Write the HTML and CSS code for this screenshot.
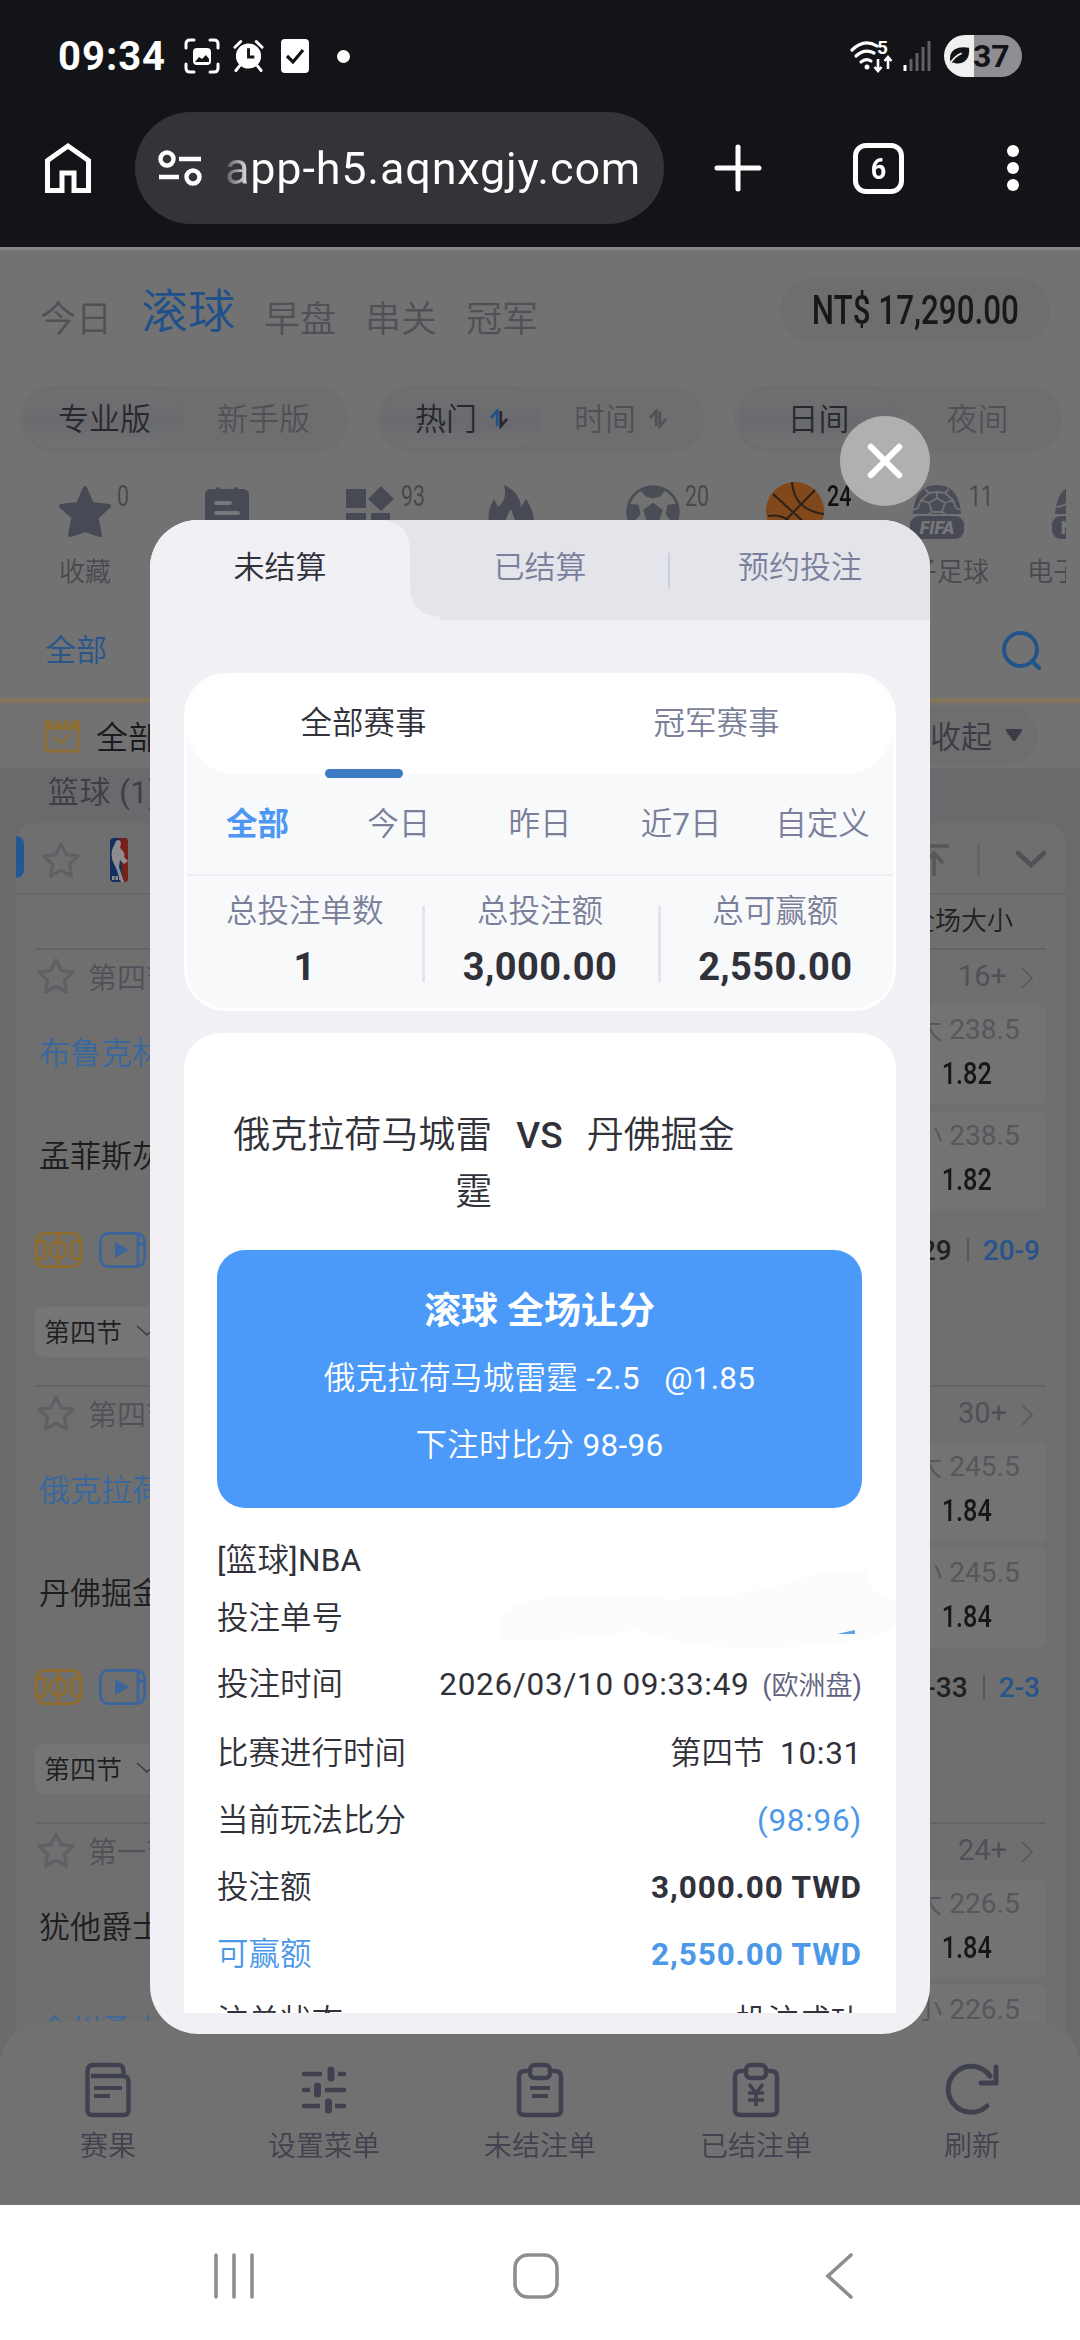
FILE: index.html
```html
<!DOCTYPE html>
<html lang="zh-CN">
<head>
<meta charset="utf-8">
<title>未结算注单</title>
<link rel="stylesheet" href="styles.css">
</head>
<body>
<svg class="defs" width="0" height="0">
  <symbol id="star-o" viewBox="0 0 42 40"><path d="M21 4l5.2 10.6 11.8 1.6-8.600 8.200 2.100 11.600L21 30.500 10.500 36l2.100-11.600L4 16.200l11.800-1.600z" fill="none" stroke="#5f5f65" stroke-width="3.200" stroke-linejoin="round"/></symbol>
  <symbol id="court" viewBox="0 0 47 36"><g fill="none" stroke="#916e2e" stroke-width="2.800"><rect x="1.400" y="1.400" width="44.200" height="33.200" rx="8"/><path d="M23.500 1v34M1 9h6q3 0 3 3v12q0 3-3 3H1M46 9h-6q-3 0-3 3v12q0 3 3 3h6"/><circle cx="23.500" cy="18" r="8.500"/></g></symbol>
  <symbol id="video" viewBox="0 0 47 36"><g fill="none" stroke="#3a659d" stroke-width="2.800"><rect x="1.400" y="1.400" width="44.200" height="33.200" rx="8"/><path d="M39 1v34"/><path d="M39 12h7M39 3h4"/></g><path d="M16 10v16l14-8z" fill="#3a659d"/></symbol>
  <symbol id="sort" viewBox="0 0 20 22"><path d="M1 10l7-8v17" fill="none" stroke="var(--a)" stroke-width="3"/><path d="M12 2v17l7-8" fill="none" stroke="var(--b)" stroke-width="3"/></symbol>
  <symbol id="chev" viewBox="0 0 12 22"><path d="M1 1l10 10L1 21" fill="none" stroke="#59595c" stroke-width="1.600"/></symbol>
  <symbol id="down" viewBox="0 0 22 12"><path d="M1 1l10 9L21 1" fill="none" stroke="#3c3c3e" stroke-width="1.600"/></symbol>
  <symbol id="ball" viewBox="0 0 52 52"><circle cx="26" cy="26" r="24.500" fill="none" stroke="#4a4c56" stroke-width="2.500"/><path d="M26 17l9.500 7-3.600 11H20l-3.500-11zM14 5q12-6 24 0l-5 6-7 2-7-2zM3 18l9 1 2 9-7 9-5-6q-2-7 1-13zM49 18l-9 1-2 9 7 9 5-6q2-7-1-13z" fill="#4a4c56"/></symbol>
</svg>

<header class="chrome">
  <div class="status">
    <span class="clock">09:34</span>
    <svg class="s-shot" viewBox="0 0 36 36"><g fill="none" stroke="#fff" stroke-width="3" stroke-linecap="round"><path d="M2 10V6q0-4 4-4h4M26 2h4q4 0 4 4v4M34 26v4q0 4-4 4h-4M10 34H6q-4 0-4-4v-4"/></g><rect x="9" y="10" width="18" height="17" rx="4" fill="#fff"/><path d="M11 24l4-5 3 2 4-4 3 4v3z" fill="#131418"/></svg>
    <svg class="s-alarm" viewBox="0 0 32 34"><circle cx="16" cy="17" r="13" fill="#fff"/><path d="M7 27l-4 5M25 27l4 5M2 8l6-6M30 8l-6-6" stroke="#fff" stroke-width="3" stroke-linecap="round"/><path d="M16 9v9h6" fill="none" stroke="#131418" stroke-width="3"/></svg>
    <svg class="s-check" viewBox="0 0 28 34"><rect width="28" height="34" rx="4" fill="#fff"/><path d="M6 17l6 6 10-12" fill="none" stroke="#131418" stroke-width="3.200"/></svg>
    <span class="s-dot"></span>
    <span class="grow"></span>
    <svg class="s-wifi" viewBox="0 0 44 34"><g fill="none" stroke="#fff" stroke-width="3.200" stroke-linecap="round"><path d="M2 11Q14-1 27 7M6 17q9-8 18-3M11 23q5-4 10-1"/></g><circle cx="17" cy="28" r="2.500" fill="#fff"/><path d="M28 20v12M24.500 28l3.500 4 3.500-4M38 30V18M34.500 22l3.500-4 3.500 4" fill="none" stroke="#fff" stroke-width="2.600"/><text x="27" y="15" font-size="19" font-weight="700" fill="#fff">5</text></svg>
    <svg class="s-sig" viewBox="0 0 28 30"><path d="M2 24v6" stroke="#fff" stroke-width="3"/><path d="M8 18v12M14 12v18M20 6v24M26 0v30" stroke="#606165" stroke-width="3"/></svg>
    <span class="battery"><svg viewBox="0 0 24 24"><path d="M3 20Q0 10 7 5q6-4 16-2 1 11-5 15-6 4-12 1z" fill="#131418"/><path d="M1 22Q7 12 15 9" stroke="#f0f0f0" stroke-width="2" fill="none"/></svg>37</span>
  </div>
  <div class="toolbar">
    <svg class="home" viewBox="0 0 48 52"><path d="M3.500 18.500L24 4l20.500 14.500v30H30V31H18v17.500H3.500z" fill="none" stroke="#fff" stroke-width="5"/></svg>
    <div class="url">
      <svg viewBox="0 0 44 36"><g fill="none" stroke="#fff" stroke-width="4.400"><circle cx="9" cy="9" r="6.500"/><path d="M21 9h22M1 27h20"/><circle cx="35" cy="27" r="6.500"/></g></svg>
      <span>app-h5.aqnxgjy.com</span>
    </div>
    <svg class="plus" viewBox="0 0 46 46"><path d="M23 2v42M2 23h42" stroke="#fff" stroke-width="5" stroke-linecap="round"/></svg>
    <span class="tabs-n"><span>6</span></span>
    <span class="dots"><i></i><i></i><i></i></span>
  </div>
</header>

<main class="page">
  <div class="top">
    <nav class="cats"><span>今日</span><span class="on">滚球</span><span>早盘</span><span>串关</span><span>冠军</span></nav>
    <div class="wallet"><span class="din">NT$ 17,290.00</span></div>
  </div>
  <div class="modes">
    <div class="seg"><span class="on">专业版</span><span>新手版</span></div>
    <div class="seg"><span class="on">热门 <svg class="s1"><use href="#sort"/></svg></span><span>时间 <svg class="s2"><use href="#sort"/></svg></span></div>
    <div class="seg"><span class="on">日间</span><span>夜间</span></div>
  </div>
  <div class="sports">
    <div class="sport"><svg viewBox="0 0 54 54"><path d="M27 3l7 16 17 2-12.500 11.500L42 50l-15-5-15 5 3.500-17.500L3 21l17-2z" fill="#474954" stroke="#474954" stroke-width="4" stroke-linejoin="round"/></svg><b>0</b><span>收藏</span></div>
    <div class="sport"><svg viewBox="0 0 54 54"><path d="M11 4h5q1-4 5 0h12q4-4 5 0h5q6 0 6 6v38q0 4-6 4H11q-6 0-6-4V10q0-6 6-6z" fill="#474954"/><path d="M16 18h14M16 28h22" stroke="#77777b" stroke-width="4" stroke-linecap="round"/></svg></div>
    <div class="sport"><svg viewBox="0 0 54 54"><path d="M4 4h20v19H4zM4 28h20v20H4zM29 28h19v20H29zM39 1l13 13-13 12-13-12z" fill="#474954"/></svg><b>93</b></div>
    <div class="sport"><svg viewBox="0 0 54 54"><path d="M8 50Q0 30 10 14l4 8Q24 14 20 0q16 7 17 22l5-8q13 20 5 34l-8-12-4 10-8-22q-6 8-8 24z" fill="#474954"/></svg></div>
    <div class="sport"><svg><use href="#ball"/></svg><b>20</b></div>
    <div class="sport cur"><svg viewBox="0 0 58 58"><circle cx="29" cy="29" r="29" fill="#80481b"/><g fill="none" stroke="#2d2119" stroke-width="2"><path d="M7 12l44 40M49 8L8 50M26 0q2 28 32 32M2 34q24-4 32 24"/></g></svg><b>24</b></div>
    <div class="sport"><svg viewBox="0 0 54 54"><path d="M3 29Q5 0 27 0t24 29z" fill="#4a4c56"/><path d="M27 13l8 5-3 9H22l-3-9zM27 13V7M19 18l-8-3M35 18l8-3M22 27l-5 3M32 27l5 3M15 4l4 4 8-1 8 1 4-4M11 15l-3 8-5 2M43 15l3 8 5 2M11 15l8-7M43 15l-8-7" fill="none" stroke="#717174" stroke-width="1.800"/><rect y="31" width="54" height="23" rx="9" fill="#474954"/><text x="27" y="49" text-anchor="middle" font-size="18" font-weight="900" font-style="italic" fill="#77777a">FIFA</text></svg><b>11</b><span>电子足球</span></div>
    <div class="sport"><svg viewBox="0 0 54 54"><path d="M3 29Q5 0 27 0t24 29z" fill="#4a4c56"/><path d="M4 22Q14 22 22 12" stroke="#717174" stroke-width="2" fill="none"/><rect y="31" width="54" height="23" rx="9" fill="#474954"/><text x="27" y="49" text-anchor="middle" font-size="18" font-weight="900" fill="#77777a">NBA</text></svg><span>电子篮球</span></div>
  </div>
  <div class="leagues"><span>全部</span><svg viewBox="0 0 40 40"><circle cx="18.500" cy="18.500" r="16.500" fill="none" stroke="#21548a" stroke-width="3.800"/><path d="M30 30l7 7" stroke="#21548a" stroke-width="4.200" stroke-linecap="round"/></svg></div>
  <div class="allbar">
    <svg class="cal" viewBox="0 0 36 36"><path d="M1.500 5h33v29h-33z" fill="none" stroke="#8b6f38" stroke-width="3"/><path d="M0 4h36v9H0z" fill="#8b6f38"/><path d="M10 0v8M18 0v8M26 0v8" stroke="#75736b" stroke-width="4"/><path d="M10 20l7 6 9-9" fill="none" stroke="#8b6f38" stroke-width="2.500"/></svg>
    <span class="t">全部</span>
    <span class="fold">收起 <svg viewBox="0 0 18 14"><path d="M1 1h16v2l-7 10H8L1 3z" fill="#3c3c46"/></svg></span>
  </div>
  <div class="group">篮球 (1)</div>
  <section class="board">
    <div class="bhead">
      <i class="chip"></i>
      <svg class="st"><use href="#star-o"/></svg>
      <svg class="nba" viewBox="0 0 18 44"><rect width="18" height="44" rx="4" fill="#12305f"/><path d="M9 0h5q4 0 4 4v36q0 4-4 4h-1z" fill="#752018"/><path d="M6 3q4-3 5 2l-1 5q6 5 4 9l4 4-4 3-4-4-1 7 5 15H11L6 30Q0 20 2 12z" fill="#8d8d90"/><path d="M2 40h9" stroke="#8d8d90" stroke-width="4" stroke-dasharray="2.500 1"/></svg>
      <span class="grow"></span>
      <svg class="totop" viewBox="0 0 30 32"><path d="M0 2h30M15 32V9M6 19l9-10 9 10" fill="none" stroke="#57575a" stroke-width="3.500"/></svg>
      <i class="bar"></i>
      <svg class="bchev" viewBox="0 0 30 18"><path d="M2 2l13 12L28 2" fill="none" stroke="#505055" stroke-width="4.500" stroke-linecap="round"/></svg>
    </div>
    <div class="bcols"><span>全场大小</span></div>

    <article class="match">
      <div class="mhead"><svg class="st"><use href="#star-o"/></svg><span>第四节</span><span class="grow"></span><span class="more">16+</span><svg class="cv"><use href="#chev"/></svg></div>
      <div class="mbody">
        <div class="teams"><span class="b">布鲁克林篮网</span><span>孟菲斯灰熊</span></div>
        <div class="odds"><div><span>大 238.5</span><b>1.82</b></div><div><span>小 238.5</span><b>1.82</b></div></div>
      </div>
      <div class="mmeta"><svg><use href="#court"/></svg><svg><use href="#video"/></svg><span class="grow"></span><b>31-29</b><i></i><b class="blue">20-9</b></div>
      <div class="msel">第四节 <svg><use href="#down"/></svg></div>
    </article>
    <article class="match">
      <div class="mhead"><svg class="st"><use href="#star-o"/></svg><span>第四节</span><span class="grow"></span><span class="more">30+</span><svg class="cv"><use href="#chev"/></svg></div>
      <div class="mbody">
        <div class="teams"><span class="b">俄克拉荷马城雷霆</span><span>丹佛掘金</span></div>
        <div class="odds"><div><span>大 245.5</span><b>1.84</b></div><div><span>小 245.5</span><b>1.84</b></div></div>
      </div>
      <div class="mmeta"><svg><use href="#court"/></svg><svg><use href="#video"/></svg><span class="grow"></span><b>32-33</b><i></i><b class="blue">2-3</b></div>
      <div class="msel">第四节 <svg><use href="#down"/></svg></div>
    </article>
    <article class="match">
      <div class="mhead"><svg class="st"><use href="#star-o"/></svg><span>第一节</span><span class="grow"></span><span class="more">24+</span><svg class="cv"><use href="#chev"/></svg></div>
      <div class="mbody">
        <div class="teams"><span>犹他爵士</span><span class="b">金州勇士</span></div>
        <div class="odds"><div><span>大 226.5</span><b>1.84</b></div><div><span>小 226.5</span><b>1.84</b></div></div>
      </div>
    </article>
  </section>

  <nav class="dock">
    <div><svg viewBox="0 0 46 56"><g fill="none" stroke="#40414f" stroke-width="4.500"><path d="M2.500 13V9q0-6 6-6h24q6 0 6 6v5H6M2.500 9v39q0 5 5 5h31q5 0 5-5V20q0-6-6-6"/><path d="M9 26h28M9 34h16" stroke-width="4"/></g></svg><span>赛果</span></div>
    <div><svg viewBox="0 0 46 56"><path d="M1 12h20M37 12h8M1 28h8M24 28h21M1 44h18M34 44h11" fill="none" stroke="#40414f" stroke-width="4.500"/><path d="M30 8v8M16.500 24v8M27.500 40v8" stroke="#40414f" stroke-width="7" stroke-linecap="round"/></svg><span>设置菜单</span></div>
    <div><svg viewBox="0 0 46 56"><g fill="none" stroke="#40414f" stroke-width="4.500"><path d="M12 9H8q-6 0-6 6v33q0 5 6 5h30q6 0 6-5V15q0-6-6-6h-4"/><rect x="13" y="3" width="20" height="13" rx="5"/><path d="M13 26h20M15 34h16" stroke-width="4"/></g></svg><span>未结注单</span></div>
    <div><svg viewBox="0 0 46 56"><g fill="none" stroke="#40414f" stroke-width="4.500"><path d="M12 9H8q-6 0-6 6v33q0 5 6 5h30q6 0 6-5V15q0-6-6-6h-4"/><rect x="13" y="3" width="20" height="13" rx="5"/><path d="M16 22l7 9 7-9M23 31v13M15 31h16M15 38h16" stroke-width="3.600"/></g></svg><span>已结注单</span></div>
    <div><svg class="rf" viewBox="0 0 54 56"><path d="M42 44A23 23 0 1 1 45 14M51 5v16H36" fill="none" stroke="#40414f" stroke-width="5" stroke-linecap="round" stroke-linejoin="round"/></svg><span>刷新</span></div>
  </nav>

  <div class="modal">
    <button class="close" aria-label="关闭"><svg viewBox="0 0 36 36"><path d="M3 3l30 30M33 3L3 33" stroke="#fff" stroke-width="6.500" stroke-linecap="round"/></svg></button>
    <div class="mtabs">
      <svg class="curve" viewBox="0 0 290 100"><path d="M0 0H232Q260 2 260 32V67Q261 95 290 97V100H0z" fill="#f0f0f5"/></svg>
      <span class="on">未结算</span><span>已结算</span><i></i><span>预约投注</span>
    </div>
    <div class="mcontent">
      <section class="summary">
        <div class="kinds"><span class="on">全部赛事</span><span>冠军赛事</span></div>
        <div class="range"><span class="on">全部</span><span>今日</span><span>昨日</span><span>近7日</span><span>自定义</span></div>
        <div class="stats"><div>总投注单数<b>1</b></div><div>总投注额<b>3,000.00</b></div><div>总可赢额<b>2,550.00</b></div></div>
      </section>
      <section class="slip">
        <div class="vs"><span class="h">俄克拉荷马城雷霆</span><em>VS</em><span class="a">丹佛掘金</span></div>
        <div class="pick"><h2>滚球 全场让分</h2><p>俄克拉荷马城雷霆 -2.5 &nbsp; @1.85</p><p>下注时比分 98-96</p></div>
        <dl>
          <div class="r0"><dt>[篮球]NBA</dt></div>
          <div class="r1"><dt>投注单号</dt><dd><svg class="smear" viewBox="0 0 402 82"><path d="M0 54q10-22 40-24 60-6 130 0 70-2 120-16 30-16 78-12l6 20q26 6 28 20-4 24-44 30-40 4-90 8-80 0-130-20-60 14-138 10z" fill="#fcfcfc"/><path d="M338 65l18-4v4z" fill="#5aa2ea"/></svg></dd></div>
          <div><dt>投注时间</dt><dd><span class="num">2026/03/10 09:33:49</span> <small>(欧洲盘)</small></dd></div>
          <div><dt>比赛进行时间</dt><dd>第四节 &nbsp;<span class="num">10:31</span></dd></div>
          <div><dt>当前玩法比分</dt><dd class="blue num">(98:96)</dd></div>
          <div><dt>投注额</dt><dd class="bold">3,000.00 TWD</dd></div>
          <div class="blue"><dt>可赢额</dt><dd class="bold">2,550.00 TWD</dd></div>
          <div><dt>注单状态</dt><dd>投注成功</dd></div>
        </dl>
      </section>
    </div>
  </div>
</main>

<footer class="sysnav">
  <svg class="n1" viewBox="0 0 40 46"><path d="M2 2v42M20 2v42M38 2v42" stroke="#8e8e8e" stroke-width="3.600" stroke-linecap="round"/></svg>
  <svg class="n2" viewBox="0 0 46 46"><rect x="2" y="2" width="42" height="42" rx="13" fill="none" stroke="#8e8e8e" stroke-width="3.600"/></svg>
  <svg class="n3" viewBox="0 0 28 46"><path d="M26 2L3 23l23 21" fill="none" stroke="#8e8e8e" stroke-width="3.600" stroke-linecap="round"/></svg>
</footer>
</body>
</html>
```
FILE: styles.css
```css
:root { --bold-stack: Roboto, "Noto Sans CJK SC", sans-serif; }
* { box-sizing: border-box; }
body { margin: 0; width: 1080px; height: 2340px; overflow: hidden; display: flex; flex-direction: column; background: #fff; font-family: Roboto, "Noto Sans CJK SC DemiLight", "Noto Sans CJK SC", sans-serif; font-weight: 400; white-space: nowrap; }
svg { display: block; flex: none; overflow: visible; }
.defs { position: absolute; }
.grow { flex: 1; }
.din { display: inline-block; }

/* status bar and browser toolbar */
.chrome { height: 247px; flex: none; background: #131418; color: #fff; }
.status { height: 112px; padding: 0 58px; display: flex; align-items: center; font-weight: 700; }
.clock { font-size: 40px; letter-spacing: 1px; width: 126px; }
.s-shot { width: 36px; height: 36px; }
.s-alarm { width: 31px; height: 34px; margin-left: 13px; }
.s-check { width: 28px; height: 34px; margin-left: 17px; }
.s-dot { width: 13px; height: 13px; border-radius: 50%; background: #fff; margin-left: 28px; }
.s-wifi { width: 44px; height: 34px; margin-right: 9px; }
.s-sig { width: 28px; height: 30px; margin-right: 13px; }
.battery { width: 78px; height: 42px; border-radius: 21px; background: linear-gradient(90deg, #f0f0f0 38%, #8f8f93 38%); color: #131418; display: flex; align-items: center; gap: 3px; padding-left: 4px; font-size: 32px; }
.battery svg { width: 22px; height: 22px; }
.toolbar { height: 112px; display: flex; align-items: center; padding-left: 44px; }
.home { width: 48px; height: 52px; }
.url { margin-left: 43px; width: 529px; height: 112px; border-radius: 56px; background: #333438; display: flex; align-items: center; padding-left: 23px; font-size: 45px; }
.url svg { width: 44px; height: 36px; }
.url span { margin-left: 23px; letter-spacing: .8px; background: linear-gradient(90deg, #55565a, #fff 28px); background-clip: text; -webkit-background-clip: text; color: transparent; }
.plus { width: 46px; height: 46px; margin-left: 51px; }
.tabs-n { margin-left: 92px; width: 51px; height: 51px; border: 5px solid #fff; border-radius: 13px; font-size: 30px; font-weight: 700; display: flex; align-items: center; justify-content: center; }
.tabs-n span { transform: scaleX(.9); }
.dots { margin-left: 103px; display: flex; flex-direction: column; gap: 5px; }
.dots i { width: 12px; height: 12px; border-radius: 50%; background: #fff; }

/* dimmed page */
.page { position: relative; height: 1958px; flex: none; overflow: hidden; background: #727272; border-top: 3px solid #848486; color: #505157; }
.top { height: 136px; display: flex; justify-content: space-between; padding: 28px 30px 0 40px; }
.cats { display: flex; align-items: flex-end; height: 64px; font-size: 36px; line-height: 44px; gap: 29px; }
.cats .on { font-size: 47px; line-height: 60px; color: #20508a; }
.wallet { width: 270px; height: 64px; border-radius: 32px; background: #6e6e6f; color: #18181b; font-size: 41px; font-weight: 500; display: flex; align-items: center; justify-content: center; }
.wallet .din { transform: scaleX(.765); }
.modes { display: flex; gap: 29px; padding: 0 18px 0 20px; height: 66px; }
.seg { flex: 1; display: grid; grid-template-columns: 1fr 1fr; border-radius: 33px; background: #6e6e6f; padding: 5px; font-size: 31px; }
.seg span { display: flex; align-items: center; justify-content: center; gap: 13px; border-radius: 28px; padding-bottom: 5px; }
.seg .on { background: linear-gradient(#717172, #696a6e 55%, #727273); color: #27282e; }
.seg svg { width: 18px; height: 20px; margin-top: 5px; --a: #505157; --b: #505157; }
.seg .s1 { --a: #20508a; --b: #27282e; }
.sports { margin-left: 14px; width: 1052px; height: 153px; padding-top: 33px; overflow: hidden; display: grid; grid-template-columns: repeat(8, 142px); }
.sport { position: relative; display: flex; flex-direction: column; align-items: center; font-size: 26px; line-height: 32px; color: #48494f; }
.sport svg { width: 54px; height: 54px; margin-bottom: 17px; }
.sport.cur svg { width: 58px; height: 58px; margin-top: -3px; }
.sport b { position: absolute; left: 103px; top: -5px; font-size: 29px; font-weight: 400; transform: scaleX(.74); transform-origin: 0 0; }
.sport.cur b { color: #111; font-weight: 500; }
.leagues { height: 93px; display: flex; justify-content: space-between; padding: 24px 38px 0 45px; font-size: 31px; line-height: 44px; color: #28568c; }
.leagues svg { width: 40px; height: 40px; margin-top: 2px; }
.allbar { height: 70px; border-top: 5px solid #84745a; display: flex; align-items: center; padding: 0 42px 2px 44px; font-size: 32px; color: #1b1b1f; }
.cal { width: 36px; height: 36px; }
.allbar .t { margin-left: 16px; flex: 1; }
.fold { display: flex; align-items: center; gap: 13px; width: 170px; height: 58px; border-radius: 29px; background: #6e6e6f; color: #3a3b44; font-size: 31px; justify-content: flex-end; padding-right: 15px; }
.fold svg { width: 18px; height: 14px; }
.group { height: 55px; background: #6a6a6c; padding-left: 48px; font-size: 31px; line-height: 50px; color: #3d3e48; letter-spacing: .5px; }
.board { padding: 0 15px 0 16px; background: #6a6a6c; }
.bhead { height: 72px; background: #6f6f70; border-radius: 20px 20px 0 0; border-bottom: 2px solid #666668; display: flex; align-items: center; padding: 4px 19px 0 0; }
.chip { width: 8px; height: 42px; background: #255694; border-radius: 0 10px 10px 0; margin-bottom: 6px; }
.st { width: 42px; height: 40px; }
.bhead .st { margin-left: 16px; }
.nba { width: 18px; height: 44px; margin-left: 28px; }
.totop { width: 30px; height: 32px; }
.bar { width: 3px; height: 32px; background: #646468; margin: 0 36px 0 28px; }
.bchev { width: 30px; height: 18px; }
.bcols { height: 53px; background: #6f6f6f; text-align: right; font-size: 26px; line-height: 53px; color: #202023; padding-right: 52px; }
.match { height: 437px; background: #6f6f6f; padding: 0 19px; }
.mhead { height: 57px; border-top: 2px solid #636365; display: flex; align-items: center; font-size: 29px; color: #505158; padding-bottom: 4px; }
.mhead .st { margin-right: 11px; }
.cv { width: 12px; height: 22px; margin: 4px 13px 0 14px; }
.mbody { display: flex; justify-content: space-between; height: 205px; }
.teams { display: grid; grid-template-rows: 91px 115px; padding-left: 4px; align-items: center; font-size: 31px; color: #1d1d20; }
.teams .b { color: #38689f; }
.odds { width: 158px; display: grid; gap: 7px; }
.odds div { background: #737373; border-radius: 6px; display: flex; flex-direction: column; align-items: center; padding-top: 7px; }
.odds span { font-size: 28px; line-height: 36px; color: #56575c; }
.odds b { font-size: 32px; line-height: 50px; font-weight: 500; color: #17171a; transform: scaleX(.79); }
.mmeta { height: 80px; display: flex; align-items: center; padding-right: 6px; font-size: 28px; color: #202023; }
.mmeta svg { width: 47px; height: 36px; margin-right: 17px; }
.mmeta b { font-weight: 500; }
.mmeta i { width: 2px; height: 24px; background: #55555a; margin: 0 14px 0 15px; }
.mmeta .blue { color: #27548c; }
.msel { margin-top: 17px; width: 170px; height: 50px; background: #757575; border-radius: 8px; display: flex; align-items: center; gap: 14px; padding: 0 0 3px 9px; font-size: 26px; color: #1d1d20; }
.msel svg { width: 22px; height: 12px; }

.dock { position: absolute; left: 0; right: 0; bottom: 0; height: 184px; background: #717172; border-radius: 44px 44px 0 0; display: grid; grid-template-columns: repeat(5, 1fr); font-size: 28px; line-height: 36px; color: #41424e; }
.dock div { display: flex; flex-direction: column; align-items: center; padding-top: 41px; gap: 11px; }
.dock svg { width: 46px; height: 56px; }
.dock .rf { width: 54px; }

/* bet history dialog */
.modal { position: absolute; left: 150px; top: 270px; width: 780px; height: 1514px; border-radius: 48px; background: #f0f0f5; color: #303139; font-size: 31.500px; }
.close { position: absolute; left: 690px; top: -104px; width: 90px; height: 90px; padding: 0; border: 0; border-radius: 50%; background: #b0b0b1; display: grid; place-items: center; }
.close svg { width: 34px; height: 34px; }
.mtabs { position: relative; height: 100px; border-radius: 48px 48px 0 0; overflow: hidden; background: #e4e5ea; display: grid; grid-template-columns: 1fr 1fr 1fr; align-items: center; text-align: center; color: #7b7f9c; font-size: 31px; line-height: 96px; padding-bottom: 4px; }
.mtabs span { position: relative; }
.mtabs .on { color: #303139; }
.mtabs i { position: absolute; left: 518px; top: 33px; width: 2px; height: 36px; background: #cdcedb; }
.curve { position: absolute; left: 0; top: 0; width: 290px; height: 100px; }
.mcontent { margin: 53px 34px 0; height: 1340px; overflow: hidden; }
.summary { height: 338px; border: 3px solid #fff; border-radius: 42px; background: #f8f9fb; overflow: hidden; }
.kinds { height: 98px; border-radius: 0 0 48px 48px; background: #fff; display: grid; grid-template-columns: 1fr 1fr; text-align: center; line-height: 95px; color: #7b7f99; }
.kinds span { position: relative; }
.kinds .on { color: #303139; }
.kinds .on::after { content: ""; position: absolute; left: 50%; top: 93px; width: 78px; height: 9px; margin-left: -39px; border-radius: 4.500px; background: #3d7cc4; }
.range { height: 102px; border-bottom: 2px solid #eeeff2; display: grid; grid-template-columns: repeat(5, 1fr); text-align: center; line-height: 102px; color: #7b7f99; }
.range .on { font-family: var(--bold-stack); color: #4b97f3; font-weight: 700; }
.stats { display: grid; grid-template-columns: repeat(3, 1fr); text-align: center; color: #7b7f99; line-height: 48px; padding-top: 12px; }
.stats div { position: relative; }
.stats b { display: block; font-size: 38px; line-height: 62px; font-weight: 700; letter-spacing: .4px; color: #303139; }
.stats div + div::before { content: ""; position: absolute; left: 0; top: 18px; width: 3px; height: 76px; background: #e4e5ea; }
.slip { margin-top: 22px; height: 1020px; border-radius: 36px 36px 0 0; background: #fff; padding: 74px 34px 0 33px; }
.vs { height: 143px; display: flex; justify-content: center; font-size: 37px; line-height: 57px; }
.vs span { width: 275px; white-space: normal; text-align: right; }
.vs .a { text-align: left; }
.vs em { font-style: normal; font-weight: 500; margin: 0 24px; }
.pick { height: 258px; border-radius: 28px; background: #4b99f8; color: #fff; text-align: center; padding-top: 35px; line-height: 67px; }
.pick h2 { margin: 0; font-family: var(--bold-stack); font-size: 37px; font-weight: 700; line-height: 54px; height: 60px; }
.pick p { margin: 0; letter-spacing: .3px; }
dl { margin: 19px 0 0; line-height: 67px; }
dl div { display: flex; justify-content: space-between; }
dl .r0 { height: 58px; letter-spacing: .3px; }
dl .r1 { height: 66px; }
dd { margin: 0; position: relative; }
small { font-size: 27px; color: #5f6180; margin-left: 5px; }
.num { letter-spacing: .7px; }
.bold { font-weight: 700; letter-spacing: .9px; }
.modal .blue { color: #4b97e8; }
.smear { position: absolute; right: -39px; top: -16px; width: 402px; height: 82px; }

.sysnav { height: 135px; flex: none; position: relative; background: #fff; display: flex; padding: 48px 0 0 214px; }
.n1 { width: 40px; height: 46px; }
.n2 { width: 46px; height: 46px; margin-left: 259px; }
.n3 { width: 28px; height: 46px; margin-left: 266px; }
```
